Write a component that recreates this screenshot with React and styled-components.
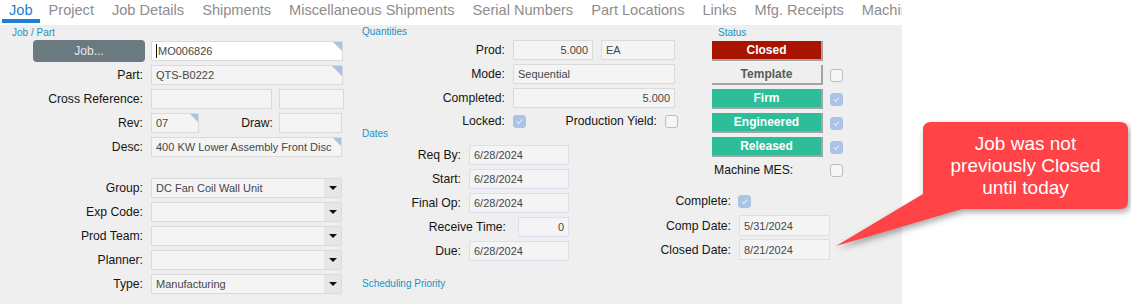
import React from 'react';
import styled, { createGlobalStyle } from 'styled-components';

const GlobalStyle = createGlobalStyle`
  html, body {
    margin: 0;
    padding: 0;
    background: #fff;
  }
  body {
    font-family: "Liberation Sans", Arial, sans-serif;
  }
`;

const Page = styled.div`
  position: relative;
  width: 1131px;
  height: 304px;
  overflow: hidden;
  background: #fff;
`;

const TabBar = styled.nav`
  display: flex;
  width: 902px;
  height: 25px;
  box-sizing: border-box;
  padding-left: 2px;
  overflow: hidden;
  white-space: nowrap;
`;

const Tab = styled.div`
  flex: none;
  height: 19px;
  padding: 0 ${p => (p.$active ? 7 : 9)}px;
  line-height: 20px;
  font-size: 14.6px;
  color: ${p => (p.$active ? '#1f7fd4' : '#8d8d8d')};
  border-bottom: 4px solid ${p => (p.$active ? '#1f7fd4' : 'transparent')};
`;

const Panel = styled.div`
  display: grid;
  grid-template-columns: 362px 288px 62px 190px;
  grid-template-rows: 101px 62px 1fr;
  width: 902px;
  height: 279px;
  box-sizing: border-box;
  padding-top: 3px;
  background: #efefef;
`;

const Column = styled.section`
  grid-column: ${p => p.$col};
  grid-row: ${p => p.$row};
  margin-top: ${p => p.$mt || 0}px;
  min-width: 0;
`;

const SectionTitle = styled.div`
  height: 10px;
  line-height: 10px;
  font-size: 10px;
  color: #1b92c6;
  white-space: nowrap;
  margin: ${p => p.$mt || 0}px 0 ${p => p.$mb ?? 3}px ${p => p.$ml || 0}px;
`;

const Row = styled.div`
  display: flex;
  align-items: center;
  height: ${p => p.$h || 20}px;
  margin-bottom: ${p => p.$mb ?? 4}px;
`;

const Spacer = styled.div`
  height: ${p => p.$h}px;
`;

const Label = styled.span`
  flex: none;
  width: ${p => p.$w}px;
  margin-right: ${p => p.$gap ?? 8}px;
  padding-left: ${p => p.$pl || 0}px;
  box-sizing: border-box;
  text-align: ${p => (p.$left ? 'left' : 'right')};
  font-size: 12.2px;
  color: #151515;
  white-space: nowrap;
`;

const Field = styled.div`
  position: relative;
  flex: none;
  display: flex;
  align-items: center;
  justify-content: ${p => (p.$right ? 'flex-end' : 'flex-start')};
  box-sizing: border-box;
  width: ${p => p.$w}px;
  height: ${p => p.$h || 20}px;
  margin-right: ${p => p.$gap || 0}px;
  padding: 0 4px;
  background: ${p => (p.$white ? '#fff' : '#f4f4f4')};
  border: 1px solid ${p => (p.$date ? '#dfdcef' : '#dadada')};
  font-size: 11px;
  color: #474747;
  white-space: nowrap;
  overflow: hidden;

  &::after {
    content: '';
    display: ${p => (p.$corner ? 'block' : 'none')};
    position: absolute;
    top: 0;
    right: 0;
    border-top: ${p => p.$corner || 0}px solid #a9c1e2;
    border-left: ${p => p.$corner || 0}px solid transparent;
  }
`;

const Caret = styled.span`
  width: 1px;
  height: 14px;
  margin-right: 1px;
  background: #111;
`;

const SelectBox = styled(Field)`
  padding-right: 0;
`;

const SelectText = styled.span`
  flex: 1;
  overflow: hidden;
`;

const ArrowBox = styled.span`
  flex: none;
  align-self: stretch;
  width: 17px;
  display: flex;
  align-items: center;
  justify-content: center;
  background: #e6e6e6;

  &::before {
    content: '';
    border-top: 4px solid #111;
    border-left: 4px solid transparent;
    border-right: 4px solid transparent;
  }
`;

const JobButton = styled.button`
  flex: none;
  width: 112px;
  height: 22px;
  margin: 0 6px 0 33px;
  padding: 0;
  border: none;
  border-radius: 4px;
  background: #6b7a81;
  color: #e9e9e9;
  font-family: inherit;
  font-size: 12px;
`;

const tones = {
  closed: { bg: '#a81400', fg: '#fff' },
  plain: { bg: '#efefef', fg: '#5a5a5a' },
  on: { bg: '#2ebd99', fg: '#fff' },
};

const StatusButton = styled.div`
  flex: none;
  display: flex;
  align-items: center;
  justify-content: center;
  box-sizing: border-box;
  width: 111px;
  height: 20px;
  margin-right: 7px;
  background: ${p => tones[p.$tone].bg};
  color: ${p => tones[p.$tone].fg};
  border-right: 2px solid #a3a3a3;
  border-bottom: 2px solid #a3a3a3;
  font-size: 12px;
  font-weight: bold;
`;

const CheckBox = styled.span`
  flex: none;
  display: flex;
  align-items: center;
  justify-content: center;
  box-sizing: border-box;
  width: 13px;
  height: 13px;
  border-radius: 3px;
  border: 1px solid ${p => (p.$on ? '#a9c4e5' : '#bdbdbd')};
  background: ${p => (p.$on ? '#a9c4e5' : '#f6f6f6')};
  margin-right: ${p => p.$gap || 0}px;
`;

const CalloutShape = styled.svg`
  position: absolute;
  left: 830px;
  top: 118px;
  filter: drop-shadow(2px 3px 3px rgba(0, 0, 0, 0.35));
`;

const CalloutText = styled.div`
  position: absolute;
  left: 923px;
  top: 122px;
  width: 205px;
  height: 87px;
  display: flex;
  align-items: center;
  justify-content: center;
  text-align: center;
  font-size: 19px;
  line-height: 22px;
  color: #fff;
`;

function Check({ on, gap }) {
  return (
    <CheckBox $on={on} $gap={gap}>
      {on && (
        <svg width="9" height="9" viewBox="0 0 9 9">
          <path d="M1.8 4.6 L3.7 6.4 L7.3 2.6" fill="none" stroke="#e6edf7" strokeWidth="1.1" />
        </svg>
      )}
    </CheckBox>
  );
}

function Select({ w, value }) {
  return (
    <SelectBox $w={w}>
      <SelectText>{value}</SelectText>
      <ArrowBox />
    </SelectBox>
  );
}

const tabs = ['Job', 'Project', 'Job Details', 'Shipments', 'Miscellaneous Shipments', 'Serial Numbers', 'Part Locations', 'Links', 'Mfg. Receipts', 'Machine MES'];

const dropdowns = [
  ['Group:', 'DC Fan Coil Wall Unit'],
  ['Exp Code:', ''],
  ['Prod Team:', ''],
  ['Planner:', ''],
  ['Type:', 'Manufacturing'],
];

const statuses = [
  ['Template', 'plain', false],
  ['Firm', 'on', true],
  ['Engineered', 'on', true],
  ['Released', 'on', true],
];

const dates = [
  ['Req By:', '6/28/2024'],
  ['Start:', '6/28/2024'],
  ['Final Op:', '6/28/2024'],
];

export default function App() {
  return (
    <Page>
      <GlobalStyle />
      <TabBar>
        {tabs.map((t, i) => (
          <Tab key={t} $active={i === 0}>{t}</Tab>
        ))}
      </TabBar>

      <Panel>
        <Column $col="1" $row="1 / 4">
          <SectionTitle $ml={12}>Job / Part</SectionTitle>
          <Row>
            <JobButton>Job...</JobButton>
            <Field $w={192} $white $corner={9}>
              <Caret />MO006826
            </Field>
          </Row>
          <Row>
            <Label $w={143}>Part:</Label>
            <Field $w={192} $corner={10}>QTS-B0222</Field>
          </Row>
          <Row>
            <Label $w={143}>Cross Reference:</Label>
            <Field $w={121} $gap={7} />
            <Field $w={65} />
          </Row>
          <Row>
            <Label $w={143}>Rev:</Label>
            <Field $w={48} $corner={8}>07</Field>
            <Label $w={74} $gap={6}>Draw:</Label>
            <Field $w={63} />
          </Row>
          <Row>
            <Label $w={143}>Desc:</Label>
            <Field $w={191} $corner={8}>400 KW Lower Assembly Front Disc</Field>
          </Row>
          <Spacer $h={17} />
          {dropdowns.map(([label, value]) => (
            <Row key={label}>
              <Label $w={143}>{label}</Label>
              <Select w={191} value={value} />
            </Row>
          ))}
        </Column>

        <Column $col="2 / 4" $row="1" $mt={-1}>
          <SectionTitle>Quantities</SectionTitle>
          <Row>
            <Label $w={143}>Prod:</Label>
            <Field $w={80} $right $gap={8}>5.000</Field>
            <Field $w={74}>EA</Field>
          </Row>
          <Row>
            <Label $w={143}>Mode:</Label>
            <Field $w={162}>Sequential</Field>
          </Row>
          <Row>
            <Label $w={143}>Completed:</Label>
            <Field $w={162} $right>5.000</Field>
          </Row>
          <Row $h={18}>
            <Label $w={143}>Locked:</Label>
            <Check on />
            <Label $w={131}>Production Yield:</Label>
            <Check />
          </Row>
        </Column>

        <Column $col="4" $row="1 / 3">
          <SectionTitle $ml={6}>Status</SectionTitle>
          <Row>
            <StatusButton $tone="closed">Closed</StatusButton>
          </Row>
          {statuses.map(([name, tone, on]) => (
            <Row key={name}>
              <StatusButton $tone={tone}>{name}</StatusButton>
              <Check on={on} />
            </Row>
          ))}
          <Row $h={18}>
            <Label $w={118} $gap={0} $pl={2} $left>Machine MES:</Label>
            <Check />
          </Row>
        </Column>

        <Column $col="2" $row="2 / 4">
          <SectionTitle $mb={6}>Dates</SectionTitle>
          {dates.map(([label, value]) => (
            <Row key={label}>
              <Label $w={99}>{label}</Label>
              <Field $w={100} $date>{value}</Field>
            </Row>
          ))}
          <Row>
            <Label $w={144} $gap={12}>Receive Time:</Label>
            <Field $w={51} $date $right>0</Field>
          </Row>
          <Row>
            <Label $w={99}>Due:</Label>
            <Field $w={100} $date>6/28/2024</Field>
          </Row>
          <SectionTitle $mt={18}>Scheduling Priority</SectionTitle>
        </Column>

        <Column $col="3 / 5" $row="3">
          <Row>
            <Label $w={81} $gap={7}>Complete:</Label>
            <Check on />
          </Row>
          <Row $h={21} $mb={3}>
            <Label $w={81}>Comp Date:</Label>
            <Field $w={91} $h={21} $date>5/31/2024</Field>
          </Row>
          <Row $h={21}>
            <Label $w={81}>Closed Date:</Label>
            <Field $w={91} $h={21} $date>8/21/2024</Field>
          </Row>
        </Column>
      </Panel>

      <CalloutShape width="305" height="135" viewBox="0 0 305 135">
        <path
          d="M101 4 H290 Q298 4 298 12 V83 Q298 91 290 91 H132 L6 128 L93 76 V12 Q93 4 101 4 Z"
          fill="#ff4346"
        />
      </CalloutShape>
      <CalloutText>
        Job was not
        <br />
        previously Closed
        <br />
        until today
      </CalloutText>
    </Page>
  );
}
